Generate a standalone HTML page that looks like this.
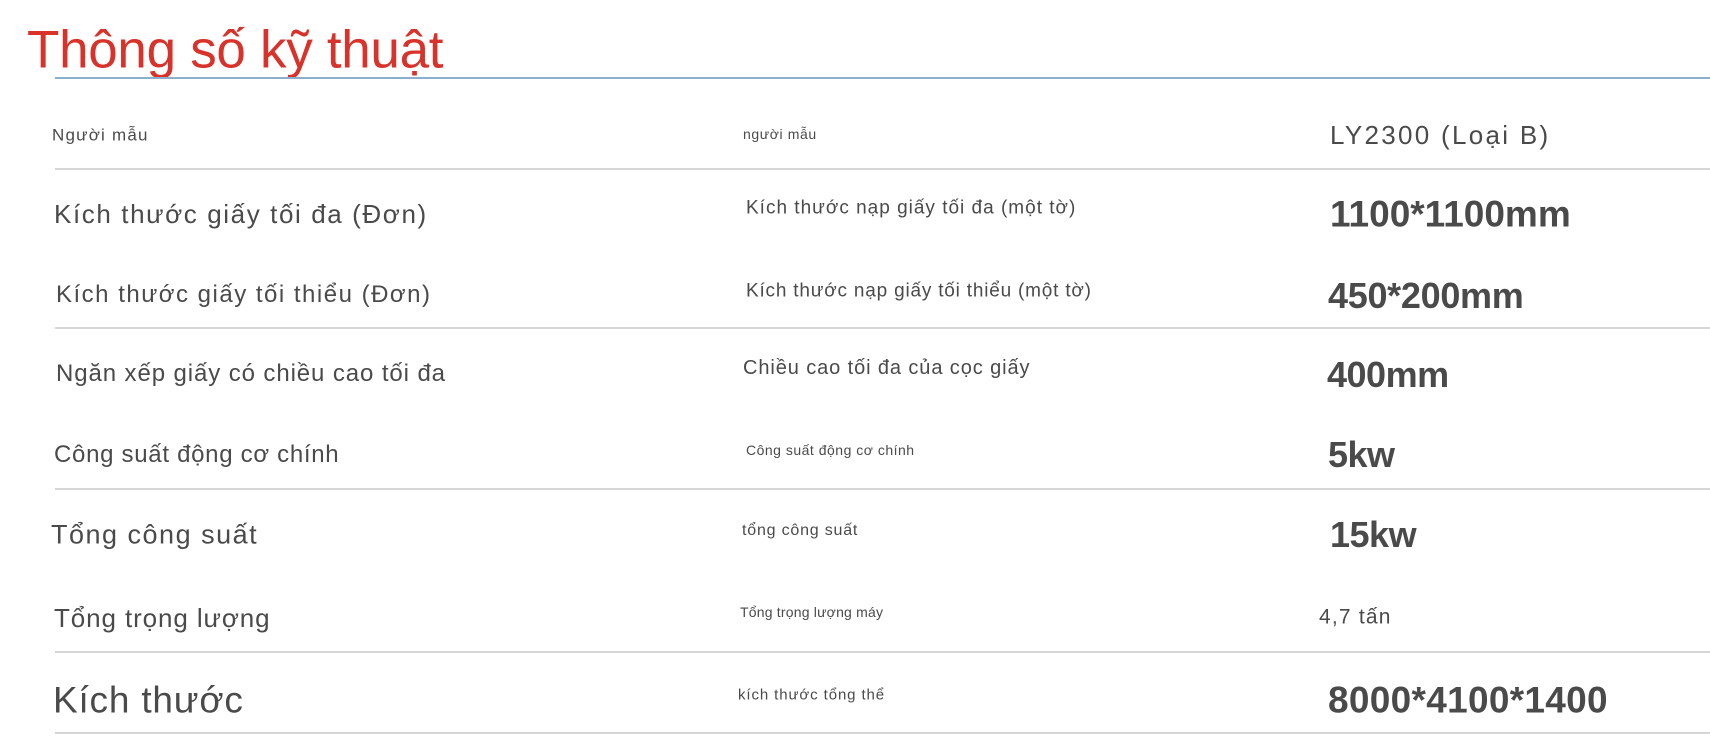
<!DOCTYPE html>
<html><head><meta charset="utf-8"><style>
html,body{margin:0;padding:0;background:#fff;width:1710px;height:736px;overflow:hidden;position:relative;font-family:"Liberation Sans",sans-serif;color:#4a4a4a}
.t{position:absolute;white-space:nowrap;transform:translateY(-50%);line-height:1}
.h{position:absolute;left:55px;right:0;height:2px;background:#d6d6d6}
</style></head><body>
<div class="t" style="left:27px;top:50px;font-size:53px;color:#d8322a;letter-spacing:-0.3px">Thông số kỹ thuật</div>
<div class="h" style="top:77px;height:2px;background:#8aafcc"></div>
<div class="h" style="top:168px"></div>
<div class="h" style="top:327px"></div>
<div class="h" style="top:488px"></div>
<div class="h" style="top:651px"></div>
<div class="h" style="top:732px"></div>

<div class="t" style="left:52px;top:135px;font-size:17px;letter-spacing:1.2px">Người mẫu</div>
<div class="t" style="left:54px;top:214px;font-size:26px;letter-spacing:1.6px">Kích thước giấy tối đa (Đơn)</div>
<div class="t" style="left:56px;top:295px;font-size:24px;letter-spacing:1.5px">Kích thước giấy tối thiểu (Đơn)</div>
<div class="t" style="left:56px;top:374px;font-size:24px;letter-spacing:0.9px">Ngăn xếp giấy có chiều cao tối đa</div>
<div class="t" style="left:54px;top:455px;font-size:24px;letter-spacing:0.7px">Công suất động cơ chính</div>
<div class="t" style="left:51px;top:535px;font-size:27px;letter-spacing:1.5px">Tổng công suất</div>
<div class="t" style="left:54px;top:618px;font-size:26px;letter-spacing:0.9px">Tổng trọng lượng</div>
<div class="t" style="left:53px;top:700px;font-size:37px;letter-spacing:0.8px">Kích thước</div>

<div class="t" style="left:743px;top:134px;font-size:14px;letter-spacing:0.6px">người mẫu</div>
<div class="t" style="left:746px;top:208px;font-size:19px;letter-spacing:1px">Kích thước nạp giấy tối đa (một tờ)</div>
<div class="t" style="left:746px;top:291px;font-size:19px;letter-spacing:0.8px">Kích thước nạp giấy tối thiểu (một tờ)</div>
<div class="t" style="left:743px;top:368px;font-size:20px;letter-spacing:0.9px">Chiều cao tối đa của cọc giấy</div>
<div class="t" style="left:746px;top:450px;font-size:14px;letter-spacing:0.5px">Công suất động cơ chính</div>
<div class="t" style="left:742px;top:531px;font-size:16px;letter-spacing:0.8px">tổng công suất</div>
<div class="t" style="left:740px;top:612px;font-size:14px;letter-spacing:0.2px">Tổng trọng lượng máy</div>
<div class="t" style="left:738px;top:695px;font-size:15px;letter-spacing:0.9px">kích thước tổng thể</div>

<div class="t" style="left:1330px;top:135px;font-size:26px;letter-spacing:2.3px">LY2300 (Loại B)</div>
<div class="t" style="left:1330px;top:214px;font-size:37px;font-weight:bold;letter-spacing:0px">1100*1100mm</div>
<div class="t" style="left:1328px;top:296px;font-size:36px;font-weight:bold;letter-spacing:-0.3px">450*200mm</div>
<div class="t" style="left:1327px;top:375px;font-size:36px;font-weight:bold;letter-spacing:-0.5px">400mm</div>
<div class="t" style="left:1328px;top:455px;font-size:36px;font-weight:bold;letter-spacing:-0.5px">5kw</div>
<div class="t" style="left:1330px;top:535px;font-size:36px;font-weight:bold;letter-spacing:-0.5px">15kw</div>
<div class="t" style="left:1319px;top:617px;font-size:21px;letter-spacing:1.2px">4,7 tấn</div>
<div class="t" style="left:1328px;top:700px;font-size:37px;font-weight:bold;letter-spacing:0.3px">8000*4100*1400</div>
</body></html>
